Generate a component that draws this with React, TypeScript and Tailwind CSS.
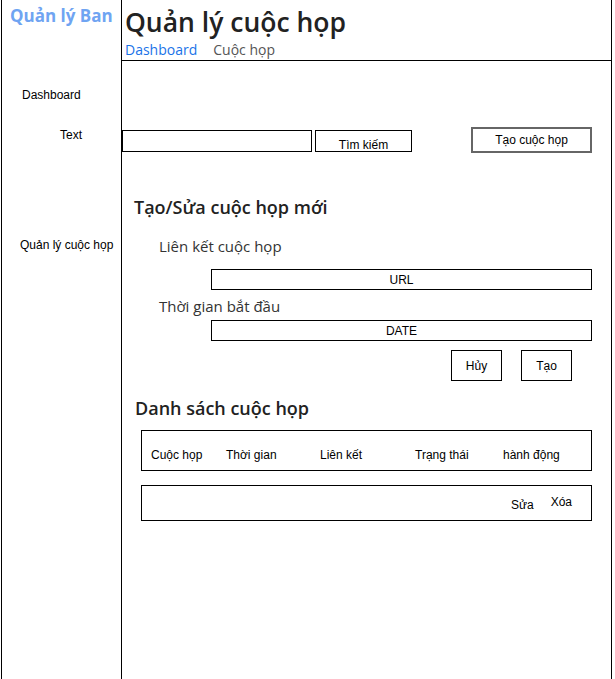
import React from "react";

const sans = "font-['Liberation_Sans',Arial,sans-serif]";
const ui = "font-['Open_Sans','Noto_Sans',sans-serif]";

const App: React.FC = () => {
  return (
    <div className="w-[615px] h-[679px] bg-white overflow-hidden">
      <div className="flex ml-[1px] w-[611px] h-[679px] border-l border-r border-black">
        {/* sidebar */}
        <div className="w-[120px] shrink-0 border-r border-black">
          <div className={`${ui} pl-[8px] pt-[5px] text-[17px] font-bold text-[#6fa4f2] leading-[22px]`}>Quản lý Ban</div>
          <div className={`${sans} pl-[20px] mt-[61px] text-[12px] text-black leading-[14px]`}>Dashboard</div>
          <div className={`${sans} pl-[58px] mt-[26px] text-[12px] text-black leading-[14px]`}>Text</div>
          <div className={`${sans} pl-[18px] mt-[96px] text-[12px] text-black leading-[14px]`}>Quản lý cuộc họp</div>
        </div>

        {/* main */}
        <div className="flex-1">
          <div className="h-[61px] border-b border-black pl-[3px]">
            <h1 className={`${ui} pt-[4px] text-[26.5px] font-semibold text-[#222] leading-[36px]`}>Quản lý cuộc họp</h1>
            <div className={`${ui} flex gap-4 text-[14px] leading-[20px]`}>
              <span className="text-[#1a73e8]">Dashboard</span>
              <span className="text-[#555]">Cuộc họp</span>
            </div>
          </div>

          <div className={`${sans} flex items-start mt-[69px] text-[12px] text-black`}>
            <div className="w-[190px] h-[22px] border border-black" />
            <div className="ml-[3px] w-[97px] h-[22px] border border-black flex items-end justify-center leading-[14px]">
              <span className="translate-y-[1px]">Tìm kiếm</span>
            </div>
            <div className="ml-[59px] -mt-[3px] w-[121px] h-[26px] border-2 border-[#666] flex items-center justify-center">Tạo cuộc họp</div>
          </div>

          <h2 className={`${ui} pl-[12px] mt-[41px] text-[18px] font-semibold text-[#222] leading-[26px]`}>Tạo/Sửa cuộc họp mới</h2>
          <div className={`${ui} pl-[37px] mt-[16px] text-[15px] text-[#333] leading-[20px]`}>Liên kết cuộc họp</div>
          <div className={`${sans} ml-[89px] mt-[13px] w-[381px] h-[21px] border border-black flex items-center justify-center text-[12px] text-black`}>URL</div>
          <div className={`${ui} pl-[37px] mt-[6px] text-[15px] text-[#333] leading-[20px]`}>Thời gian bắt đầu</div>
          <div className={`${sans} ml-[89px] mt-[4px] w-[381px] h-[21px] border border-black flex items-center justify-center text-[12px] text-black`}>DATE</div>
          <div className={`${sans} flex mt-[9px] ml-[329px] gap-[19px] text-[12px] text-black`}>
            <div className="w-[51px] h-[31px] border border-black flex items-center justify-center">Hủy</div>
            <div className="w-[51px] h-[31px] border border-black flex items-center justify-center">Tạo</div>
          </div>

          <h2 className={`${ui} pl-[13px] mt-[14px] text-[18px] font-semibold text-[#222] leading-[26px]`}>Danh sách cuộc họp</h2>
          <div className={`${sans} ml-[19px] mt-[9px] w-[451px] h-[41px] border border-black flex items-center pt-[8px] text-[12px] text-black`}>
            <span className="ml-[9px] w-[75px]">Cuộc họp</span>
            <span className="w-[94px]">Thời gian</span>
            <span className="w-[95px]">Liên kết</span>
            <span className="w-[88px]">Trạng thái</span>
            <span>hành động</span>
          </div>
          <div className={`${sans} ml-[19px] mt-[14px] w-[451px] h-[36px] border border-black flex items-center justify-end pr-[19px] text-[12px] text-black`}>
            <span className="mt-[4px]">Sửa</span>
            <span className="ml-[17px] -mt-[2px]">Xóa</span>
          </div>
        </div>
      </div>
    </div>
  );
};

export default App;
